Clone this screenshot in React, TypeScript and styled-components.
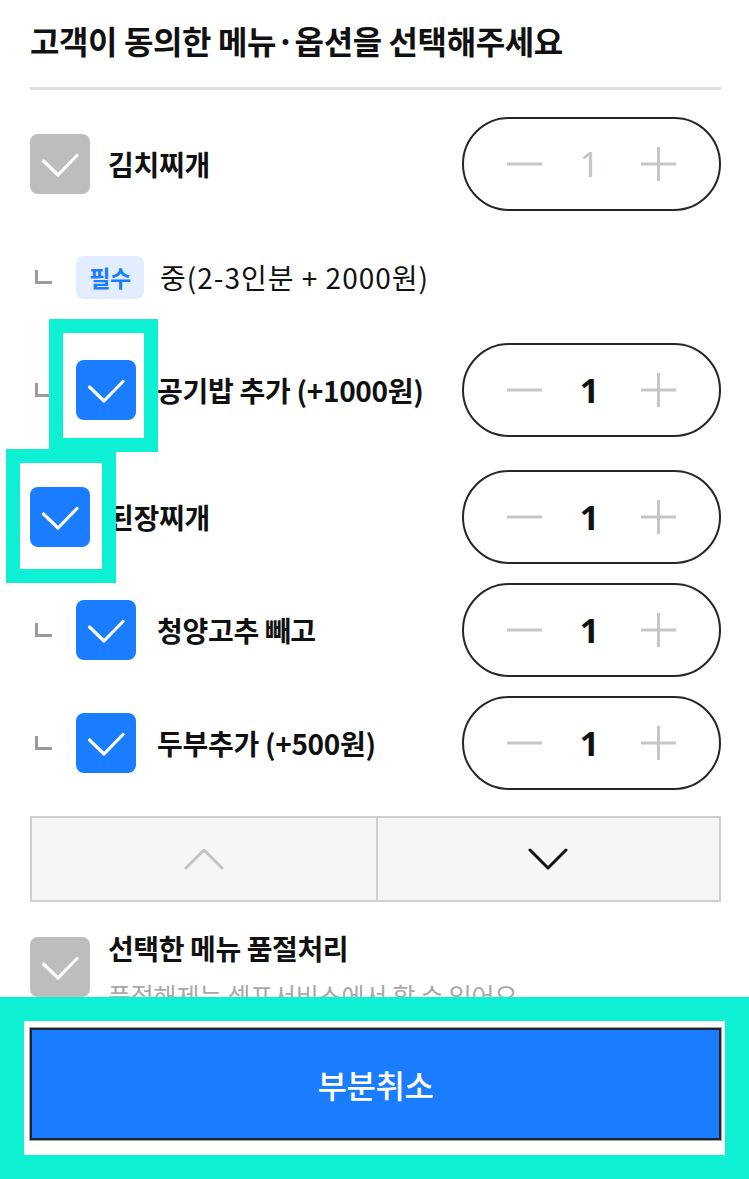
import React from 'react';
import styled, { createGlobalStyle } from 'styled-components';

const TEAL = '#0df0d4';
const BLUE = '#1a7cff';

const GlobalStyle = createGlobalStyle`
  html, body { margin: 0; padding: 0; background: #fff; }
  body {
    font-family: "Noto Sans CJK KR", "Noto Sans", sans-serif;
    color: #111;
  }
  * { box-sizing: border-box; }
`;

const Page = styled.div`
  position: relative;
  width: 749px;
  height: 1179px;
  overflow: hidden;
  padding: 20px 28px 0 30px;
`;

const Title = styled.h1`
  margin: 0;
  font-size: 32px;
  font-weight: 700;
  line-height: 40px;
  letter-spacing: -0.4px;
  padding-bottom: 27px;
  border-bottom: 3px solid #dedede;
`;

const List = styled.div`
  display: flex;
  flex-direction: column;
  gap: 19px;
  margin-top: 27px;
`;

const Row = styled.div<{ $group?: boolean }>`
  display: flex;
  align-items: center;
  height: 94px;
  margin-top: ${(p) => (p.$group ? '14px' : '0')};
`;

const Left = styled.div<{ $sub?: boolean }>`
  display: flex;
  align-items: center;
  flex: 1;
  min-width: 0;
  gap: ${(p) => (p.$sub ? '21px' : '18px')};
`;

const Branch = styled.span`
  display: block;
  width: 17px;
  height: 14px;
  margin: 0 3px 0 5px;
  border-left: 3px solid #9b9b9b;
  border-bottom: 3px solid #9b9b9b;
`;

const BoxWrap = styled.span`
  position: relative;
  display: block;
  flex: none;
`;

const Box = styled.span<{ $on?: boolean }>`
  display: flex;
  align-items: center;
  justify-content: center;
  width: 60px;
  height: 60px;
  border-radius: 8px;
  background: ${(p) => (p.$on ? BLUE : '#bdbdbd')};
`;

const Highlight = styled.span<{ $t: number; $r: number; $b: number; $l: number }>`
  position: absolute;
  z-index: 2;
  top: ${(p) => -p.$t}px;
  right: ${(p) => -p.$r}px;
  bottom: ${(p) => -p.$b}px;
  left: ${(p) => -p.$l}px;
  border: 14px solid ${TEAL};
  pointer-events: none;
`;

const Label = styled.span<{ $regular?: boolean }>`
  font-size: 28px;
  font-weight: ${(p) => (p.$regular ? 400 : 700)};
  letter-spacing: ${(p) => (p.$regular ? '1px' : '-0.3px')};
  line-height: 34px;
  white-space: nowrap;
`;

const Badge = styled.span`
  display: flex;
  align-items: center;
  justify-content: center;
  height: 43px;
  width: 68px;
  border-radius: 7px;
  background: #e2eeff;
  color: ${BLUE};
  font-size: 23px;
  font-weight: 700;
  letter-spacing: -0.3px;
  margin-right: -5px;
`;

const Stepper = styled.div`
  flex: none;
  display: flex;
  align-items: center;
  justify-content: space-between;
  width: 259px;
  height: 94px;
  padding: 0 43px;
  border: 2px solid #262626;
  border-radius: 47px;
`;

const Count = styled.span<{ $dim?: boolean }>`
  font-family: "Noto Sans", "Noto Sans CJK KR", sans-serif;
  font-size: 34px;
  line-height: 40px;
  font-weight: ${(p) => (p.$dim ? 400 : 700)};
  color: ${(p) => (p.$dim ? '#c4c4c4' : '#111')};
  margin-left: -4px;
`;

const Pager = styled.div`
  display: grid;
  grid-template-columns: 1fr 1fr;
  height: 86px;
  margin-top: 26px;
  border: 2px solid #cfcfcf;
  background: #f6f6f6;
`;

const PagerButton = styled.div<{ $divider?: boolean }>`
  display: flex;
  align-items: center;
  justify-content: center;
  border-left: ${(p) => (p.$divider ? '2px solid #cfcfcf' : 'none')};
`;

const SoldOut = styled.div`
  display: flex;
  align-items: flex-start;
  gap: 18px;
  margin-top: 35px;
`;

const SoldOutText = styled.div`
  display: flex;
  flex-direction: column;
  margin-top: -4px;
`;

const SoldOutTitle = styled.span`
  font-size: 28px;
  font-weight: 700;
  letter-spacing: -0.4px;
  line-height: 30px;
`;

const SoldOutSub = styled.span`
  margin-top: 17px;
  font-size: 25px;
  font-weight: 400;
  letter-spacing: -0.2px;
  line-height: 30px;
  color: #a8a8a8;
`;

const Footer = styled.div`
  position: absolute;
  left: 0;
  right: 0;
  bottom: 0;
  height: 182px;
  border: 24px solid ${TEAL};
  background: #fff;
  padding: 7px 4px 15px 6px;
  z-index: 3;
`;

const CancelButton = styled.div`
  display: flex;
  align-items: center;
  justify-content: center;
  height: 112px;
  background: ${BLUE};
  border: 2px solid #1c2433;
  box-shadow: 0 0 0 1px #a0a0a0;
  color: #fff;
  font-size: 32px;
  font-weight: 500;
  letter-spacing: -0.4px;
`;

const Check = () => (
  <svg width="60" height="60" viewBox="0 0 60 60" fill="none">
    <path d="M13.5 27 L28 41 L47 21.5" stroke="#fff" strokeWidth="3.2" strokeLinecap="round" strokeLinejoin="round" />
  </svg>
);

const Minus = () => (
  <svg width="35" height="36" viewBox="0 0 35 36">
    <line x1="0" y1="18" x2="35" y2="18" stroke="#c6c6c6" strokeWidth="3" />
  </svg>
);

const Plus = () => (
  <svg width="35" height="36" viewBox="0 0 35 36">
    <line x1="0" y1="18" x2="35" y2="18" stroke="#c6c6c6" strokeWidth="3" />
    <line x1="17.5" y1="1" x2="17.5" y2="35" stroke="#c6c6c6" strokeWidth="3" />
  </svg>
);

const Chevron = ({ up, color }: { up?: boolean; color: string }) => (
  <svg width="40" height="24" viewBox="0 0 40 24" fill="none">
    <path
      d={up ? 'M2 21 L20 3 L38 21' : 'M2 3 L20 21 L38 3'}
      stroke={color}
      strokeWidth="3"
      strokeLinecap="round"
      strokeLinejoin="round"
    />
  </svg>
);

type HL = { t: number; r: number; b: number; l: number };

const CheckBox = ({ on, hl }: { on?: boolean; hl?: HL }) => (
  <BoxWrap>
    <Box $on={on}>
      <Check />
    </Box>
    {hl && <Highlight $t={hl.t} $r={hl.r} $b={hl.b} $l={hl.l} />}
  </BoxWrap>
);

const Qty = ({ dim }: { dim?: boolean }) => (
  <Stepper>
    <Minus />
    <Count $dim={dim}>1</Count>
    <Plus />
  </Stepper>
);

export default function App() {
  return (
    <>
      <GlobalStyle />
      <Page>
        <Title>고객이 동의한 메뉴·옵션을 선택해주세요</Title>
        <List>
          <Row>
            <Left>
              <CheckBox />
              <Label>김치찌개</Label>
            </Left>
            <Qty dim />
          </Row>
          <Row>
            <Left $sub>
              <Branch />
              <Badge>필수</Badge>
              <Label $regular>중(2-3인분 + 2000원)</Label>
            </Left>
          </Row>
          <Row>
            <Left $sub>
              <Branch />
              <CheckBox on hl={{ t: 41, r: 22, b: 32, l: 27 }} />
              <Label>공기밥 추가 (+1000원)</Label>
            </Left>
            <Qty />
          </Row>
          <Row $group>
            <Left>
              <CheckBox on hl={{ t: 38, r: 26, b: 36, l: 24 }} />
              <Label>된장찌개</Label>
            </Left>
            <Qty />
          </Row>
          <Row>
            <Left $sub>
              <Branch />
              <CheckBox on />
              <Label>청양고추 빼고</Label>
            </Left>
            <Qty />
          </Row>
          <Row>
            <Left $sub>
              <Branch />
              <CheckBox on />
              <Label>두부추가 (+500원)</Label>
            </Left>
            <Qty />
          </Row>
        </List>
        <Pager>
          <PagerButton>
            <Chevron up color="#c2c2c2" />
          </PagerButton>
          <PagerButton $divider>
            <Chevron color="#111" />
          </PagerButton>
        </Pager>
        <SoldOut>
          <CheckBox />
          <SoldOutText>
            <SoldOutTitle>선택한 메뉴 품절처리</SoldOutTitle>
            <SoldOutSub>품절해제는 셀프서비스에서 할 수 있어요</SoldOutSub>
          </SoldOutText>
        </SoldOut>
        <Footer>
          <CancelButton>부분취소</CancelButton>
        </Footer>
      </Page>
    </>
  );
}
